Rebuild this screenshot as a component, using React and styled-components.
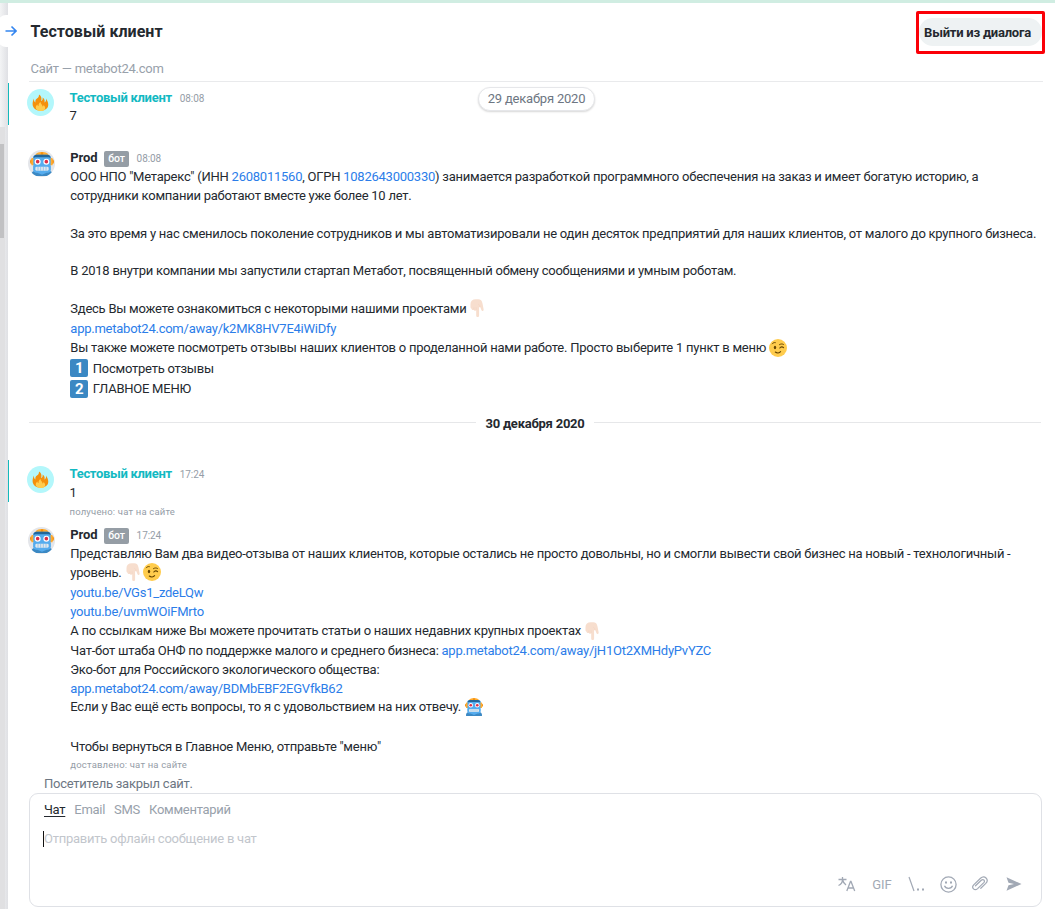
import React from "react";
import styled, { createGlobalStyle } from "styled-components";

const GlobalStyle = createGlobalStyle`
  * { box-sizing: border-box; }
  body { margin: 0; background: #fff; font-family: Roboto, "Liberation Sans", sans-serif; font-size: 13px; color: #24292f; overflow: hidden; }
`;

const Page = styled.div`
  width: 1055px;
  height: 909px;
  display: flex;
  flex-direction: column;
  overflow: hidden;
`;
const TopStrip = styled.div`
  height: 3px;
  flex: none;
  background: #d0ede2;
`;
const Body = styled.div`
  flex: 1;
  display: flex;
  min-height: 0;
  position: relative;
`;
const Rail = styled.div`
  width: 8px;
  flex: none;
  padding-top: 124px;
  background: linear-gradient(90deg, #f3f4f5, #dfe0e4);
`;
const RailTrack = styled.div`
  width: 5px;
  height: 782px;
  padding-top: 17px;
  background: #e0e0e2;
`;
const RailThumb = styled.div`
  width: 4px;
  height: 94px;
  background: #c1c1c3;
`;
const Expand = styled.div`
  position: absolute;
  left: -2px;
  top: 12px;
  width: 24px;
  height: 32px;
  border-radius: 8px;
  background: #fff;
  display: flex;
  align-items: center;
  padding-left: 7px;
`;
const Main = styled.main`
  flex: 1;
  min-width: 0;
  display: flex;
  flex-direction: column;
`;
const Header = styled.header`
  height: 79px;
  flex: none;
  margin: 0 12px 0 21px;
  border-bottom: 1px solid #e9eaec;
  display: flex;
  justify-content: space-between;
`;
const Titles = styled.div`
  padding: 18px 0 0 1.500px;
`;
const Title = styled.h1`
  margin: 0;
  font-size: 16px;
  line-height: 22px;
  font-weight: 700;
  letter-spacing: ${(p) => p.$spacing}px;
`;
const Subtitle = styled.div`
  margin-top: 16px;
  line-height: 20px;
  color: #98a1ab;
  letter-spacing: ${(p) => p.$spacing}px;
`;
const Highlight = styled.div`
  width: 129px;
  height: 43px;
  margin: 8px -2px 0 0;
  border: 3px solid #fb0007;
  border-radius: 2px;
  padding: 4px 0 0;
`;
const LeaveButton = styled.button`
  width: 123px;
  height: 28px;
  border: 0;
  border-radius: 14px;
  padding: 1px 6px 0 0;
  background: #eef2f3;
  color: #24292f;
  font: 700 13px/27px Roboto, sans-serif;
  letter-spacing: ${(p) => p.$spacing}px;
  white-space: nowrap;
`;
const DatePill = styled.div`
  position: absolute;
  left: 478px;
  top: 84px;
  width: 117px;
  height: 24px;
  border-radius: 12px;
  border: 1px solid #e6e7ea;
  box-shadow: 0 1px 2px rgba(0, 0, 0, 0.16);
  background: #fff;
  color: #6d7682;
  line-height: 22px;
  text-align: center;
  letter-spacing: ${(p) => p.$spacing}px;
`;
const Message = styled.section`
  display: flex;
  flex: none;
  height: ${(p) => p.$height}px;
  margin-top: ${(p) => p.$gap || 0}px;
`;
const Accent = styled.div`
  width: 1px;
  height: 42px;
  background: ${(p) => (p.$on ? "#13b9bb" : "transparent")};
`;
const AvatarCol = styled.div`
  width: 61px;
  flex: none;
  padding: ${(p) => p.$top}px 0 0 ${(p) => p.$left}px;
`;
const Avatar = styled.div`
  width: 27px;
  height: 27px;
  border-radius: 50%;
  overflow: hidden;
  background: ${(p) => p.$bg};
  display: flex;
  align-items: center;
  justify-content: center;
`;
const Content = styled.div`
  padding-top: ${(p) => p.$top || 0}px;
  margin-left: ${(p) => (p.$client ? -0.5 : 0.3)}px;
`;
const Meta = styled.div`
  height: 18px;
  padding-bottom: 2px;
  display: flex;
  align-items: center;
`;
const Author = styled.span`
  font-weight: 700;
  letter-spacing: ${(p) => (p.$client ? -0.3 : -0.15)}px;
  color: ${(p) => (p.$client ? "#12b9c2" : "#24292f")};
`;
const Tag = styled.span`
  height: 16px;
  width: 25px;
  margin: 3px -0.5px 0 6.800px;
  border-radius: 2px;
  background: #959da5;
  color: #fff;
  font-size: 10.5px;
  font-weight: 500;
  line-height: 16px;
  text-align: center;
`;
const Time = styled.span`
  margin-left: 8px;
  margin-top: 2px;
  font-size: 10px;
  color: #959da7;
  letter-spacing: -0.1px;
`;
const Line = styled.div`
  height: ${(p) => p.$h || 19}px;
  padding-bottom: ${(p) => p.$lift || 0}px;
  display: flex;
  align-items: center;
  white-space: pre;
  letter-spacing: -0.242px;
  svg { flex: none; }
`;
const Link = styled.a`
  color: #2b7de9;
`;
const Note = styled.div`
  margin-top: ${(p) => p.$top || 2}px;
  height: 14px;
  line-height: 14px;
  font-size: 9.5px;
  color: #959da7;
  letter-spacing: 0.18px;
`;
const DayDivider = styled.div`
  flex: none;
  height: 20px;
  margin: 14px 14px 1px 21px;
  display: flex;
  align-items: center;
  gap: 9px;
  font-weight: 700;
  letter-spacing: ${(p) => p.$spacing}px;
  &::before, &::after { content: ""; flex: 1; height: 1px; background: #e6e7e9; margin-top: -1px; }
`;
const Status = styled.div`
  flex: none;
  height: 18px;
  line-height: 18px;
  margin: 4px 0 0 36px;
  color: #6c7682;
  letter-spacing: ${(p) => p.$spacing}px;
`;
const Composer = styled.div`
  flex: none;
  width: 1013px;
  height: 114px;
  margin-left: 21px;
  border: 1px solid #dfe1e6;
  border-radius: 9px;
  display: flex;
  flex-direction: column;
  padding: 7px 8px 12px 13px;
`;
const Tabs = styled.div`
  display: flex;
  gap: 9px;
  padding-left: 1px;
  line-height: 18px;
`;
const Tab = styled.span`
  color: ${(p) => (p.$active ? "#24292f" : "#98a1ab")};
  text-decoration: ${(p) => (p.$active ? "underline" : "none")};
  text-underline-offset: 2px;
  letter-spacing: -0.28px;
`;
const Input = styled.div`
  margin-top: 12px;
  height: 16px;
  line-height: 16px;
  border-left: 1px solid #111;
  color: #c2c6cc;
  letter-spacing: ${(p) => p.$spacing}px;
`;
const Tools = styled.div`
  margin-top: auto;
  height: 20px;
  display: flex;
  align-items: center;
  justify-content: flex-end;
  color: #a2a9b5;
`;
const Tool = styled.div`
  width: ${(p) => p.$w}px;
  height: 20px;
  display: flex;
  align-items: center;
  justify-content: center;
  flex: none;
`;

const Fire = () => (
  <svg width="17" height="17" viewBox="0 0 34 34">
    <path fill="#f4900c" d="M14 1c5 3 6 8 4 13 3-1 4-4 3-7 4 2 5 6 4 10 2-1 4-4 3-8 6 9 6 17 0 21-5 4-17 4-22 0C0 25 0 17 4 9c0 4 0 6 3 8-1-3 0-6 3-8 3-2 4-4 4-8z" />
    <path fill="#ffcc4d" d="M9 31c-3-4-1-8 2-10 0 2 1 3 2 3 0-4 1-6 4-8 0 4 4 5 4 9 2-1 2-2 2-3 4 3 4 7 2 10-4 3-12 3-16-1z" />
  </svg>
);
const Robot = ({ size = 18 }) => (
  <svg width={size} height={size} viewBox="0 0 36 36">
    <ellipse fill="#f4900c" cx="33.5" cy="14.5" rx="2.5" ry="3.5" />
    <ellipse fill="#f4900c" cx="2.5" cy="14.5" rx="2.5" ry="3.5" />
    <path fill="#ffac33" d="M34 19a1 1 0 0 1-1 1h-3a1 1 0 0 1-1-1v-9a1 1 0 0 1 1-1h3a1 1 0 0 1 1 1v9zM7 19a1 1 0 0 1-1 1H3a1 1 0 0 1-1-1v-9a1 1 0 0 1 1-1h3a1 1 0 0 1 1 1v9z" />
    <path fill="#ffac33" d="M28 5c0 2.800-4.500 4-10 4S8 7.800 8 5s4.500-5 10-5 10 2.200 10 5z" />
    <path fill="#f4900c" d="M20 4c0 2.200-.9 3-2 3s-2-.8-2-3 .9-4 2-4 2 1.800 2 4z" />
    <path fill="#55acee" d="M5 27V7c0-2 3-3 5-3h16c2 0 5 1 5 3v20z" />
    <path fill="#226699" d="M5 9c0-3 2-5 5-5h16c3 0 5 2 5 5l-3-1H8z" />
    <circle fill="#fff" cx="24.500" cy="14.500" r="4.500" />
    <circle fill="#dd2e44" cx="24.500" cy="14.500" r="2.700" />
    <circle fill="#fff" cx="11.500" cy="14.500" r="4.500" />
    <circle fill="#dd2e44" cx="11.500" cy="14.500" r="2.700" />
    <path fill="#3b88c3" d="M3 36c-1 0-1-1-1-2 0-4 3-6 6-6h20c3 0 6 2 6 6 0 1 0 2-1 2z" />
    <path fill="#55acee" d="M5 21h26v7c0 2-3 3-6 3l-7 3-7-3c-3 0-6-1-6-3z" />
    <rect fill="#e1e8ed" x="8" y="22" width="20" height="6" rx="2" />
    <path stroke="#55acee" strokeWidth=".8" d="M12 22v6M16 22v6M20 22v6M24 22v6" />
  </svg>
);
const EndIcon = styled.span`
  display: flex;
  margin-left: 1px;
`;
const Hand = styled.svg`
  margin: 0 3.500px 0 -3px;
`;
const Point = () => (
  <Hand width="18" height="18" viewBox="0 0 18 18">
    <path fill="#f7dece" d="M4.500 5C4.500 2 6.500.2 9.800.2h2.300c2.600 0 4 1.500 4.400 4.200l1.100 5.900c.3 1.800-1.700 2.300-2.200.8l-1.100-2.900h-1.200v8.300c0 2-2.900 2-2.900 0v-5.200c-1.200 1-2.200.6-2.400-.5-1.200.5-2.100 0-2.200-1.100-.8-.3-1.100-.9-1.100-1.800z" />
    <path fill="none" stroke="#f0d0be" strokeWidth=".4" d="M7.800 10.500V8.500M10.200 11V8.500M14 8c0-1.500-1-2.500-2-3" />
  </Hand>
);
const Wink = () => (
  <svg width="18" height="18" viewBox="0 0 18 18">
    <circle cx="9" cy="9" r="9" fill="#ffcc4d" />
    <ellipse cx="6" cy="8.500" rx="1.200" ry="1.700" fill="#664500" />
    <g fill="none" stroke="#664500" strokeLinecap="round">
      <path strokeWidth="1" d="M3.300 4.800c.7-1 1.800-1.500 3-1.200M10.500 5.600c1.500-.9 2.800-.8 3.900-.2" />
      <path strokeWidth="1.100" d="M10.800 9c1-1.400 2.700-1.400 3.800-.4M6.300 13c1.700 1.400 4 1.200 5.300-.4" />
    </g>
  </svg>
);
const Keycap = styled.span`
  width: 18px;
  height: 18px;
  margin-right: 4.500px;
  border-radius: 2px;
  background: #3b88c3;
  color: #fff;
  font: 700 15px/18px Roboto, sans-serif;
  text-align: center;
  letter-spacing: 0;
`;

const BotName = ({ time }) => (
  <Meta>
    <Author>Prod</Author>
    <Tag>бот</Tag>
    <Time>{time}</Time>
  </Meta>
);

export default function App() {
  return (
    <>
      <GlobalStyle />
      <Page>
        <TopStrip />
        <Body>
          <Rail>
            <RailTrack><RailThumb /></RailTrack>
          </Rail>
          <Expand>
            <svg width="12" height="12" viewBox="0 0 12 12" fill="none" stroke="#3586f0" strokeWidth="1.600">
              <path d="M.5 6h10M6.500 1.500L11 6l-4.500 4.500" />
            </svg>
          </Expand>
          <Main>
            <Header>
              <Titles>
                <Title $spacing={0.05}>Тестовый клиент</Title>
                <Subtitle $spacing={-0.25}>Сайт — metabot24.com</Subtitle>
              </Titles>
              <Highlight>
                <LeaveButton $spacing={-0.23}>Выйти из диалога</LeaveButton>
              </Highlight>
            </Header>
            <DatePill $spacing={-0.2}>29 декабря 2020</DatePill>

            <Message $height={42} $gap={1}>
              <Accent $on />
              <AvatarCol $top={6} $left={18}><Avatar $bg="#b3f7fb"><Fire /></Avatar></AvatarCol>
              <Content $top={6} $client>
                <Meta><Author $client>Тестовый клиент</Author><Time>08:08</Time></Meta>
                <Line $h={17}>7</Line>
              </Content>
            </Message>

            <Message $height={250} $gap={24}>
              <Accent />
              <AvatarCol $top={1} $left={19}><Avatar $bg="#e4e6ea"><Robot size={24} /></Avatar></AvatarCol>
              <Content>
                <BotName time="08:08" />
                <Line>ООО НПО "Метарекс" (ИНН <Link>2608011560</Link>, ОГРН <Link>1082643000330</Link>) занимается разработкой программного обеспечения на заказ и имеет богатую историю, а</Line>
                <Line>сотрудники компании работают вместе уже более 10 лет.</Line>
                <Line />
                <Line>За это время у нас сменилось поколение сотрудников и мы автоматизировали не один десяток предприятий для наших клиентов, от малого до крупного бизнеса.</Line>
                <Line $h={18} />
                <Line>В 2018 внутри компании мы запустили стартап Метабот, посвященный обмену сообщениями и умным роботам.</Line>
                <Line $h={18} />
                <Line $h={20}>Здесь Вы можете ознакомиться с некоторыми нашими проектами <Point /></Line>
                <Line $h={20}><Link>app.metabot24.com/away/k2MK8HV7E4iWiDfy</Link></Line>
                <Line>Вы также можете посмотреть отзывы наших клиентов о проделанной нами работе. Просто выберите 1 пункт в меню <Wink /></Line>
                <Line $h={22}><Keycap>1</Keycap>Посмотреть отзывы</Line>
                <Line $h={20} $lift={1}><Keycap>2</Keycap>ГЛАВНОЕ МЕНЮ</Line>
              </Content>
            </Message>

            <DayDivider $spacing={-0.23}>30 декабря 2020</DayDivider>

            <Message $height={58} $gap={26}>
              <Accent $on />
              <AvatarCol $top={6} $left={18}><Avatar $bg="#b3f7fb"><Fire /></Avatar></AvatarCol>
              <Content $top={5} $client>
                <Meta><Author $client>Тестовый клиент</Author><Time>17:24</Time></Meta>
                <Line>1</Line>
                <Note $top={3}>получено: чат на сайте</Note>
              </Content>
            </Message>

            <Message $height={245} $gap={8}>
              <Accent />
              <AvatarCol $top={1} $left={19}><Avatar $bg="#e4e6ea"><Robot size={24} /></Avatar></AvatarCol>
              <Content>
                <BotName time="17:24" />
                <Line>Представляю Вам два видео-отзыва от наших клиентов, которые остались не просто довольны, но и смогли вывести свой бизнес на новый - технологичный -</Line>
                <Line $h={20} $lift={2}>уровень. <Point /> <Wink /></Line>
                <Line><Link>youtu.be/VGs1_zdeLQw</Link></Line>
                <Line><Link>youtu.be/uvmWOiFMrto</Link></Line>
                <Line>А по ссылкам ниже Вы можете прочитать статьи о наших недавних крупных проектах <Point /></Line>
                <Line $h={20}>Чат-бот штаба ОНФ по поддержке малого и среднего бизнеса: <Link>app.metabot24.com/away/jH1Ot2XMHdyPvYZC</Link></Line>
                <Line>Эко-бот для Российского экологического общества:</Line>
                <Line><Link>app.metabot24.com/away/BDMbEBF2EGVfkB62</Link></Line>
                <Line $h={17}>Если у Вас ещё есть вопросы, то я с удовольствием на них отвечу. <EndIcon><Robot /></EndIcon></Line>
                <Line $h={22} />
                <Line>Чтобы вернуться в Главное Меню, отправьте "меню"</Line>
                <Note>доставлено: чат на сайте</Note>
              </Content>
            </Message>

            <Status $spacing={-0.25}>Посетитель закрыл сайт.</Status>
            <Composer>
              <Tabs>
                <Tab $active>Чат</Tab>
                <Tab>Email</Tab>
                <Tab>SMS</Tab>
                <Tab>Комментарий</Tab>
              </Tabs>
              <Input $spacing={-0.25}>Отправить офлайн сообщение в чат</Input>
              <Tools>
                <Tool $w={34}>
                  <svg width="18" height="16" viewBox="0 0 18 16" fill="none" stroke="currentColor" strokeWidth="1.300">
                    <path d="M.5 3.500h8M4.500 1v2.500c0 3-1.500 5-4 6M4.500 3.500c.5 2.500 1.500 4 3.500 5.500M8.800 15l3.700-9.500h.5L16.700 15M10 12h5.500" />
                  </svg>
                </Tool>
                <Tool $w={36}>GIF</Tool>
                <Tool $w={32}>
                  <svg width="17" height="16" viewBox="0 0 17 16">
                    <path d="M1 1l5 14" stroke="currentColor" strokeWidth="1.200" />
                    <path d="M9 12.500h2v2H9zM14 12.500h2v2h-2z" fill="currentColor" />
                  </svg>
                </Tool>
                <Tool $w={32}>
                  <svg width="17" height="17" viewBox="0 0 17 17" fill="none" stroke="currentColor" strokeWidth="1.300">
                    <circle cx="8.500" cy="8.500" r="7.600" />
                    <path d="M4.500 9.800c1.200 3.400 6.800 3.400 8 0" />
                    <path d="M5 5.500h2v2H5zM10 5.500h2v2h-2z" fill="currentColor" stroke="none" />
                  </svg>
                </Tool>
                <Tool $w={31}>
                  <svg width="18" height="17" viewBox="0 0 18 17" fill="none" stroke="currentColor" strokeWidth="1.200" strokeLinecap="round">
                    <path d="M4.500 9.800l5.800-5.600c1.800-1.700 4.300.5 2.500 2.400l-6.200 6c-3 2.700-6.600-.8-3.900-3.700l6.800-6.700c4-3.600 9 1.200 5.300 5.200l-5 4.900" />
                  </svg>
                </Tool>
                <Tool $w={38}>
                  <svg width="16" height="14" viewBox="0 0 16 14">
                    <path fill="currentColor" d="M.5.300L15.500 7 .5 13.700 2.500 8.200 8 7 2.500 5.800z" />
                  </svg>
                </Tool>
              </Tools>
            </Composer>
          </Main>
        </Body>
      </Page>
    </>
  );
}
